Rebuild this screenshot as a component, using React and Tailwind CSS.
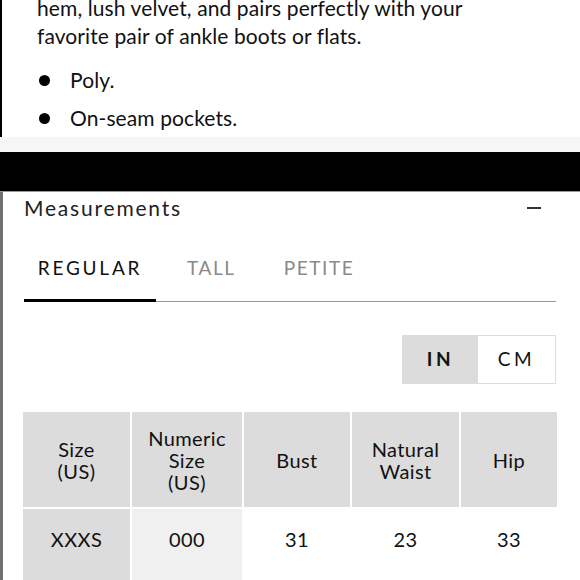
import React from 'react';

const font = { fontFamily: 'Lato, "Noto Sans", sans-serif' };

const rows = [{ size: 'XXXS', numeric: '000', bust: '31', waist: '23', hip: '33' }];

export default function App() {
  return (
    <div className="w-[580px] h-[580px] overflow-hidden bg-white text-[#111]" style={font}>
      <div className="h-[137px] border-l-2 border-black pl-[35px] pr-4 overflow-hidden">
        <p className="text-[21px] leading-[28px] tracking-[0.1px] -mt-[6px] whitespace-nowrap">
          hem, lush velvet, and pairs perfectly with your
          <br />
          favorite pair of ankle boots or flats.
        </p>
        <ul className="mt-[16px] flex flex-col gap-[10px] text-[21px] leading-[28px] tracking-[0.1px]">
          <li className="flex items-center">
            <span className="w-[11px] h-[11px] rounded-full bg-black ml-[2px] mr-[20px]" />
            Poly.
          </li>
          <li className="flex items-center">
            <span className="w-[11px] h-[11px] rounded-full bg-black ml-[2px] mr-[20px]" />
            On-seam pockets.
          </li>
        </ul>
      </div>
      <div className="h-[15px] bg-[#f6f6f6]" />
      <div className="h-[40px] bg-black border-b border-[#999]" />
      <div className="border-l-[3px] border-[#6f6f6f] h-[390px] pl-[21px] pr-[24px]">
        <div className="flex items-center justify-between h-[32px]">
          <span className="text-[21px] tracking-[1.8px] text-[#222]">Measurements</span>
          <span className="w-[14px] h-[2px] bg-[#333] mr-[15px]" />
        </div>
        <div className="mt-[27px] flex items-end h-[48px] text-[19px] tracking-[1.6px]">
          <div className="w-[132px] h-full flex items-start justify-center pt-[3px] text-[#111] tracking-[2.8px]">REGULAR</div>
          <div className="ml-[31px] h-full flex items-start pt-[3px] text-[#8a8a8a]">TALL</div>
          <div className="ml-[48px] h-full flex items-start pt-[3px] text-[#8a8a8a]">PETITE</div>
        </div>
        <div className="flex items-end">
          <div className="w-[132px] h-[3px] bg-black" />
          <div className="flex-1 h-px bg-[#999]" />
        </div>
        <div className="flex justify-end mt-[33px]">
          <div className="flex h-[49px] border border-[#dcdcdc] text-[19px] tracking-[3.5px]">
            <div className="w-[75px] bg-[#dcdcdc] flex items-center justify-center font-bold">IN</div>
            <div className="w-[77px] bg-white flex items-center justify-center">CM</div>
          </div>
        </div>
        <table className="table-fixed w-[538px] mt-[26px] -ml-[3px] border-separate border-spacing-[2px] text-[20px] leading-[22px] tracking-[0.4px] text-center text-[#111]">
          <colgroup>
            <col className="w-[107px]" />
            <col className="w-[110px]" />
            <col className="w-[106px]" />
            <col className="w-[107px]" />
            <col className="w-[96px]" />
          </colgroup>
          <thead>
            <tr className="h-[95px]">
              <th className="bg-[#dcdcdc] font-normal p-0">Size<br />(US)</th>
              <th className="bg-[#dcdcdc] font-normal p-0">Numeric<br />Size<br />(US)</th>
              <th className="bg-[#dcdcdc] font-normal p-0">Bust</th>
              <th className="bg-[#dcdcdc] font-normal p-0">Natural<br />Waist</th>
              <th className="bg-[#dcdcdc] font-normal p-0">Hip</th>
            </tr>
          </thead>
          <tbody>
            {rows.map((r) => (
              <tr key={r.size} className="h-[72px]">
                <td className="bg-[#dcdcdc] align-top p-0 pt-[19px]">{r.size}</td>
                <td className="bg-[#f0f0f0] align-top p-0 pt-[19px]">{r.numeric}</td>
                <td className="align-top p-0 pt-[19px]">{r.bust}</td>
                <td className="align-top p-0 pt-[19px]">{r.waist}</td>
                <td className="align-top p-0 pt-[19px]">{r.hip}</td>
              </tr>
            ))}
          </tbody>
        </table>
      </div>
    </div>
  );
}
